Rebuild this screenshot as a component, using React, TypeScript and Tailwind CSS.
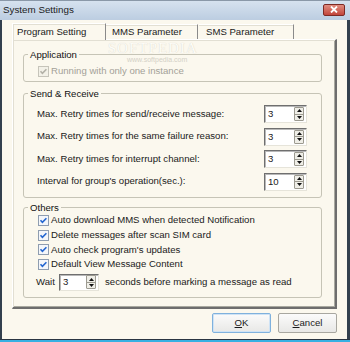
import React from 'react';

const Check: React.FC<{ disabled?: boolean }> = ({ disabled }) => (
  <svg width="11" height="11" viewBox="0 0 11 11" className="shrink-0">
    <rect x="0.5" y="0.5" width="10" height="10" fill={disabled ? '#f3f1e8' : '#f4f6fa'} stroke={disabled ? '#c6c4ba' : '#8f9db0'} />
    <path d="M2.5 5.3 L4.4 7.3 L8.4 3.2" fill="none" stroke={disabled ? '#b3b1a7' : '#2466d0'} strokeWidth="1.6" />
  </svg>
);

const Arrows: React.FC = () => (
  <div className="flex flex-col w-[10px] h-[14px] border border-[#9c9a90] bg-[#efeee7] rounded-[1px]">
    <div className="flex-1 flex items-center justify-center border-b border-[#9c9a90]">
      <svg width="5" height="3" viewBox="0 0 5 3"><path d="M2.5 0 L5 3 L0 3 Z" fill="#111" /></svg>
    </div>
    <div className="flex-1 flex items-center justify-center">
      <svg width="5" height="3" viewBox="0 0 5 3"><path d="M0 0 L5 0 L2.5 3 Z" fill="#111" /></svg>
    </div>
  </div>
);

const Spin: React.FC<{ value: string; cls: string }> = ({ value, cls }) => (
  <div className={`flex items-center bg-white border-t border-l border-t-[#6f6f6f] border-l-[#6f6f6f] border-r border-b border-r-[#e6e4da] border-b-[#e6e4da] shadow-[inset_1px_1px_0_#b8b8b8] pl-[3px] pr-[2px] ${cls}`}>
    <span className="flex-1 leading-none">{value}</span>
    <Arrows />
  </div>
);

const Group: React.FC<{ title: string; className?: string; children: React.ReactNode }> = ({ title, className, children }) => (
  <fieldset className={`border border-[#c6c4b6] rounded-[3px] ${className ?? ''}`}>
    <legend className="ml-[4px] px-[2px] leading-[13px] text-[#111]">{title}</legend>
    {children}
  </fieldset>
);

const retry = [
  ['Max. Retry times for send/receive message:', '3'],
  ['Max. Retry times for the same failure reason:', '3'],
  ['Max. Retry times for interrupt channel:', '3'],
  ["Interval for group's operation(sec.):", '10'],
];

const others = [
  'Auto download MMS when detected Notification',
  'Delete messages after scan SIM card',
  "Auto check program's updates",
  'Default View Message Content',
];

export default function App() {
  return (
    <div className="w-[350px] h-[342px] flex flex-col bg-[#33404e] font-['Liberation_Sans',Arial,sans-serif] text-[9.6px] text-[#1a1a1a] overflow-hidden select-none">
      {/* title bar */}
      <div className="h-[20px] shrink-0 flex items-center justify-between bg-linear-to-b from-[#d6e2ef] to-[#bccde1] border-t border-[#8a98a8] pl-[3px] pr-[5px]">
        <span className="text-[9.8px] text-[#1c1c1c]">System Settings</span>
        <div className="w-[22px] h-[12px] mt-[-2px] rounded-[2px] bg-linear-to-b from-[#e08c80] to-[#c2443a] border border-[#7d2a24] flex items-center justify-center">
          <svg width="8" height="7" viewBox="0 0 8 7">
            <path d="M1 0.5 L7 6.5 M7 0.5 L1 6.5" stroke="#fff" strokeWidth="1.8" />
          </svg>
        </div>
      </div>

      <div className="flex-1 flex flex-col ml-[2px] mr-[3px] bg-[#fbf8ee] pl-[10px] pr-[10px]">
        {/* tabs */}
        <div className="flex items-end h-[19px]">
          <div className="relative z-10 w-[94px] h-[17px] -mb-px bg-[#fbf8ee] border-t border-l border-r border-t-[#ffffff] border-l-[#ffffff] border-r-[#8a8a8a] shadow-[inset_1px_1px_0_#e2dfd3] flex items-center pl-[4px]">
            Program Setting
          </div>
          <div className="w-[92px] h-[15px] border-t border-r border-t-[#ffffff] border-r-[#8a8a8a] shadow-[inset_0_1px_0_#e2dfd3] flex items-center pl-[6px]">
            MMS Parameter
          </div>
          <div className="w-[95px] h-[15px] border-t border-r border-t-[#ffffff] border-r-[#8a8a8a] shadow-[inset_0_1px_0_#e2dfd3] flex items-center pl-[7px] ml-[1px]">
            SMS Parameter
          </div>
        </div>

        {/* panel */}
        <div className="relative h-[270px] border-t border-l border-t-[#ffffff] border-l-[#ffffff] border-r-2 border-b-2 border-r-[#6e6e6e] border-b-[#6e6e6e] shadow-[inset_1px_1px_0_#e2dfd3,inset_-1px_-1px_0_#a9a9a0] pl-[10px] pr-[13px] pt-[8px]">
          <div className="pointer-events-none absolute left-[95px] top-[2px] font-['Liberation_Serif',serif] text-[15px] leading-[13px] tracking-[1px] text-[#fdfcf7] [text-shadow:0_0_1px_#cfccc0]">
            SOFTPEDIA
          </div>
          <div className="pointer-events-none absolute left-[114px] top-[16px] text-[7px] leading-[8px] text-[#d3d0c6]">
            www.softpedia.com
          </div>

          <Group title="Application" className="h-[34px]">
            <div className="flex items-center gap-[2px] pl-[14px] mt-[3px] text-[#a3a198]">
              <Check disabled />
              <span>Running with only one instance</span>
            </div>
          </Group>

          <Group title="Send & Receive" className="mt-[5px] h-[111px]">
            <div className="flex flex-col gap-[4.5px] mt-[5px] pl-[13px] pr-[14px]">
              {retry.map(([label, v], i) => (
                <div key={i} className="flex items-center justify-between">
                  <span>{label}</span>
                  <Spin value={v} cls="w-[43px] h-[18px]" />
                </div>
              ))}
            </div>
          </Group>

          <Group title="Others" className="mt-[3px] h-[97px]">
            <div className="flex flex-col pl-[14px] -mt-[1px]">
              {others.map((t, i) => (
                <div key={i} className="flex items-center gap-[2px] h-[14.7px]">
                  <Check />
                  <span>{t}</span>
                </div>
              ))}
              <div className="flex items-center mt-[2px] -ml-[2px]">
                <span className="w-[23px]">Wait</span>
                <Spin value="3" cls="w-[40px] h-[17px]" />
                <span className="ml-[6px]">seconds before marking a message as read</span>
              </div>
            </div>
          </Group>
        </div>

        {/* buttons */}
        <div className="flex justify-end gap-[7px] mt-[4px]">
          <button className="w-[59px] h-[20px] rounded-[2px] border border-[#7fb1dd] bg-linear-to-b from-[#fbfbfb] to-[#e8e8e6] shadow-[inset_0_0_0_1px_#cfe3f5] flex items-center justify-center">
            <span><span className="underline">O</span>K</span>
          </button>
          <button className="w-[59px] h-[20px] rounded-[2px] border border-[#a8a7a0] bg-linear-to-b from-[#fbfbfb] to-[#e8e8e6] flex items-center justify-center">
            <span><span className="underline">C</span>ancel</span>
          </button>
        </div>
      </div>
      <div className="h-[1px] shrink-0 bg-[#2a3542]" />
      <div className="h-[2px] shrink-0 bg-[#38b0e2]" />
    </div>
  );
}
